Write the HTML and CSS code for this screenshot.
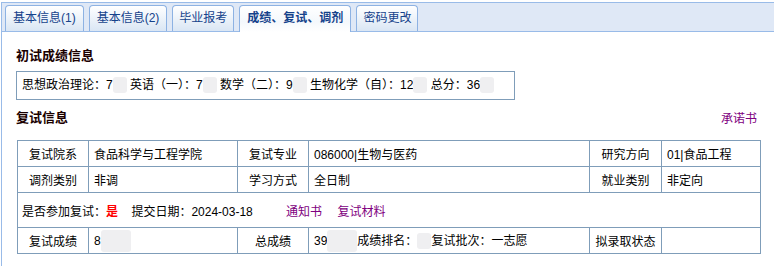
FILE: index.html
```html
<!doctype html>
<html>
<head>
<meta charset="UTF-8">
<title>成绩、复试、调剂</title>
	<link rel="stylesheet" href="styles.css">
</head>

<body>
<div class="panel">
	<div class="tabs">
		<div class="tab wide">基本信息(1)</div>
		<div class="tab wide">基本信息(2)</div>
		<div class="tab">毕业报考</div>
		<div class="tab active">成绩、复试、调剂</div>
		<div class="tab">密码更改</div>
	</div>

	<div class="content">
		<h3 class="title">初试成绩信息</h3>
		<div class="scores">
			思想政治理论：<span class="num">7</span><span class="mask"></span>
			英语（一）：<span class="num">7</span><span class="mask"></span>
			数学（二）：<span class="num">9</span><span class="mask"></span>
			生物化学（自）：<span class="num">12</span><span class="mask"></span>
			总分：<span class="num">36</span><span class="mask"></span>
		</div>

		<div class="title-row">
			<h3 class="title">复试信息</h3>
			<a class="link" href="#">承诺书</a>
		</div>

		<table class="info">
			<colgroup>
				<col style="width:71px">
				<col style="width:149px">
				<col style="width:71px">
				<col style="width:281px">
				<col style="width:72px">
				<col style="width:99px">
			</colgroup>
			<tr>
				<td class="label">复试院系</td>
				<td>食品科学与工程学院</td>
				<td class="label">复试专业</td>
				<td>086000|生物与医药</td>
				<td class="label">研究方向</td>
				<td>01|食品工程</td>
			</tr>
			<tr>
				<td class="label">调剂类别</td>
				<td>非调</td>
				<td class="label">学习方式</td>
				<td>全日制</td>
				<td class="label">就业类别</td>
				<td>非定向</td>
			</tr>
			<tr class="tall">
				<td colspan="6">
					是否参加复试：<span class="yes">是</span>
					<span class="gap">提交日期：2024-03-18</span>
					<a class="link doc" href="#">通知书</a>
					<a class="link" href="#">复试材料</a>
				</td>
			</tr>
			<tr>
				<td class="label">复试成绩</td>
				<td>8<span class="mask wide"></span></td>
				<td class="label">总成绩</td>
				<td>39<span class="mask wide"></span>成绩排名：<span class="mask"></span>复试批次：一志愿</td>
				<td class="label">拟录取状态</td>
				<td></td>
			</tr>
		</table>
	</div>
</div>
</body>
</html>
```

FILE: styles.css
```css
body {
	margin: 0;
	overflow: hidden;
	font-family: "Liberation Sans", "Noto Sans CJK SC", sans-serif;
	font-size: 12px;
	color: #000000;
}

.panel {
	margin: 2px 0 0 1px;
	width: 800px;
	height: 264px;
	border-left: 1px solid #99bbe8;
	border-top: 1px solid #99bbe8;
}

.tabs {
	display: flex;
	gap: 5px;
	box-sizing: border-box;
	height: 29px;
	padding: 2px 0 0 3px;
	background-color: #dfe8f6;
	border-bottom: 1px solid #99bbe8;
}

.tab {
	box-sizing: border-box;
	height: 26px;
	padding: 0 6px;
	line-height: 25px;
	color: #15428b;
	border: 1px solid #8db2e3;
	border-bottom: none;
	border-radius: 4px 4px 0 0;
	background: linear-gradient(#ffffff, #dae6f4);
}

.tab.wide {
	padding: 0 7px;
}

.tab.active {
	height: 27px;
	padding: 0 7px;
	font-weight: bold;
	background: linear-gradient(#ffffff 0, #f4f8fc 60%, #ffffff 100%);
}

.content {
	padding: 0 14px;
}

.title {
	margin: 16px 0 7px 0;
	font-size: 13px;
	line-height: 16px;
	font-weight: bold;
	color: #1a0000;
}

.scores {
	box-sizing: border-box;
	width: 499px;
	height: 29px;
	padding-left: 5px;
	line-height: 27px;
	border: 1px solid #7f9db9;
	white-space: nowrap;
}

.num {
	color: #000000;
}

.mask {
	display: inline-block;
	width: 14px;
	height: 16px;
	vertical-align: -4px;
	background-color: #efeff1;
	border-radius: 3px;
}

.mask.wide {
	width: 30px;
	height: 22px;
	vertical-align: -7px;
}

.title-row {
	display: flex;
	justify-content: space-between;
	align-items: center;
	width: 744px;
	margin: 9px 0 14px 0;
}

.title-row .title {
	margin: 0;
}

.link {
	color: #800080;
	text-decoration: none;
	margin-right: 3px;
}

.info {
	width: 744px;
	margin-left: 1px;
	border-collapse: collapse;
	table-layout: fixed;
}

.info td {
	height: 25px;
	padding: 0 5px;
	border: 1px solid #7f9db9;
	white-space: nowrap;
}

.info td.label {
	text-align: center;
	padding: 0;
}

.info tr.tall td {
	height: 34px;
	padding-left: 4px;
}

.yes {
	color: #ff0000;
	font-weight: bold;
	margin-right: 10px;
}

.gap {
	margin-right: 30px;
}

.doc {
	margin-right: 12px;
}
```
